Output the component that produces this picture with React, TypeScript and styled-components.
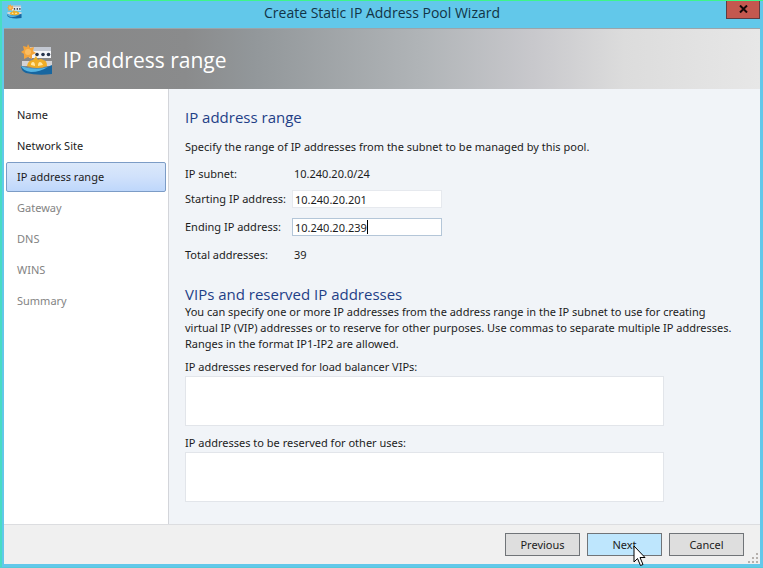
import React, { useState } from "react";
import styled, { createGlobalStyle } from "styled-components";

const GlobalStyle = createGlobalStyle`
  *, *::before, *::after { box-sizing: border-box; }
  html, body, #root { height: 100%; margin: 0; }
  body {
    font-family: "Noto Sans", "Open Sans", sans-serif;
    font-size: 11px;
    line-height: 16px;
    color: #1c1c1c;
    background: #5fc9ea;
  }
  button, input, textarea { font: inherit; color: inherit; }
`;

const Window = styled.div`
  display: flex;
  flex-direction: column;
  min-height: 100vh;
  padding: 0 3px 3px 4px;
  background: #62c8ea;
  border-top: 1px solid #3ef58a;
  border-bottom: 1px solid #55cbd8;
  box-shadow: inset 2px 0 #48dcc4;
`;

const TitleBar = styled.header`
  display: grid;
  grid-template-columns: 34px 1fr 34px;
  align-items: start;
  height: 27px;
`;

const TitleIcon = styled.div`
  padding: 3px 0 0 3px;
  line-height: 0;
`;

const Title = styled.div`
  font-family: "Open Sans", sans-serif;
  font-size: 14px;
  line-height: 24px;
  text-align: center;
  color: #123446;
`;

const CloseButton = styled.button`
  display: flex;
  align-items: center;
  justify-content: center;
  height: 18px;
  padding: 0 0 2px;
  border: 1px solid #5f3c42;
  border-top: 0;
  background: #c4584f;
`;

const Client = styled.main`
  flex: 1;
  display: flex;
  flex-direction: column;
  background: #f1f4f8;
`;

const Banner = styled.div`
  display: flex;
  align-items: center;
  gap: 10px;
  height: 61px;
  padding: 2px 17px 0;
  background: linear-gradient(90deg, #868686 0%, #8a8b8c 24%, #92979a 33%, #b0b4b7 55%, #c8c8cc 70%, #dcdcdc 82%, #e7e7e7 100%);
  border-top: 1px solid #9aa5ab;
`;

const BannerTitle = styled.h1`
  margin: 0;
  font-family: "Open Sans", sans-serif;
  font-size: 21px;
  line-height: 30px;
  font-weight: 400;
  color: #fff;
`;

const Body = styled.div`
  flex: 1;
  display: grid;
  grid-template-columns: 165px 1fr;
`;

const Steps = styled.nav`
  display: flex;
  flex-direction: column;
  gap: 1px;
  padding: 11px 2px;
  background: #fff;
  border-right: 1px solid #d3d5da;
`;

const Step = styled.button<{ $state: "done" | "current" | "todo" }>`
  height: 30px;
  padding: 0 10px;
  text-align: left;
  border: 1px solid ${(p) => (p.$state === "current" ? "#7c9cc6" : "transparent")};
  border-radius: 2px;
  background: ${(p) =>
    p.$state === "current" ? "linear-gradient(#dbe8fa, #d0e1fb 50%, #bed7fb)" : "transparent"};
  color: ${(p) => (p.$state === "todo" ? "#838383" : "#1c1c1c")};
`;

const Content = styled.section`
  padding: 18px 16px 16px;
`;

const Heading = styled.h2`
  margin: 0;
  font-family: "Open Sans", sans-serif;
  font-size: 15px;
  line-height: 20px;
  font-weight: 400;
  color: #1f3f87;
`;

const Intro = styled.p`
  margin: 12px 0;
`;

const Fields = styled.div`
  display: grid;
  grid-template-columns: 107px 150px;
  grid-template-rows: 14px repeat(3, 20px);
  row-gap: 8px;
  align-items: center;
  white-space: nowrap;
  margin-bottom: 19px;
`;

const Value = styled.output`
  padding-left: 2px;
`;

const InputWrap = styled.div`
  position: relative;
  display: flex;
`;

const TextInput = styled.input<{ $active?: boolean }>`
  width: 100%;
  height: 18px;
  padding: 0 2px;
  border: 1px solid ${(p) => (p.$active ? "#b4c6d8" : "#e6e9ee")};
  background: #fff;
  caret-color: transparent;
  outline: 0;
`;

const Caret = styled.span`
  position: absolute;
  left: 75px;
  top: 2px;
  width: 1px;
  height: 14px;
  background: #000;
`;

const Description = styled.p`
  max-width: 552px;
  margin: 0;
`;

const AreaList = styled.div`
  display: flex;
  flex-direction: column;
  gap: 9px;
  margin-top: 7px;
`;

const AreaField = styled.div`
  display: flex;
  flex-direction: column;
  gap: 1px;
`;

const Area = styled.textarea`
  display: block;
  width: 100%;
  max-width: 479px;
  height: 50px;
  padding: 2px;
  border: 1px solid #e2e5ea;
  background: #fff;
  resize: none;
`;

const Footer = styled.footer`
  position: relative;
  display: flex;
  justify-content: flex-end;
  gap: 7px;
  padding: 8px 16px;
  background: #f0f0f0;
  border-top: 1px solid #dcdde0;
`;

const Button = styled.button<{ $hot?: boolean }>`
  width: 75px;
  height: 23px;
  padding: 0;
  border: 1px solid #707478;
  background: ${(p) => (p.$hot ? "#bee6fd" : "#dedede")};
`;

const Grip = styled.svg`
  position: absolute;
  right: 1px;
  bottom: 0;
`;

const Pointer = styled.svg`
  position: absolute;
  right: 114px;
  bottom: -3px;
`;

function PoolIcon({ size }: { size: number }) {
  return (
    <svg width={size} height={size} viewBox="0 0 32 32" aria-hidden="true">
      <path d="M9 3h21v5H9z" fill="#c3c8d2" />
      <path d="M8 7h22v7H8z" fill="#f4f5f8" />
      <path d="M1 17h30v5H1z" fill="#d3d3d6" />
      <path d="M0 22q16 6 31-1v9q-14 2-26-1-5-2-5-7z" fill="#1766a0" />
      <path d="M0 22q14 5 27 1-8 5-17 5-8-1-10-6z" fill="#55b4e2" />
      <circle cx="16" cy="10.500" r="1.800" fill="#26344d" />
      <circle cx="22" cy="10.500" r="1.800" fill="#26344d" />
      <circle cx="27.500" cy="10.500" r="1.800" fill="#26344d" />
      <path d="M6 22q1-6 6-6l3-4 2 4q3-2 5 0 4 0 4 6-9 4-20 0z" fill="#efad25" />
      <path d="M10 21q0-3 2-3t2 4zM17 22q0-4 2-4t3 3z" fill="#ffe6a0" />
      <path d="M7 0l2 4 4-1-1 4 3 2-4 2 0 4-4-2-4 2 0-5-3-2 3-2-1-4 4 1z" fill="#f3a43c" />
      <circle cx="7" cy="8" r="3" fill="#fbbd62" />
    </svg>
  );
}

const steps: { label: string; state: "done" | "current" | "todo" }[] = [
  { label: "Name", state: "done" },
  { label: "Network Site", state: "done" },
  { label: "IP address range", state: "current" },
  { label: "Gateway", state: "todo" },
  { label: "DNS", state: "todo" },
  { label: "WINS", state: "todo" },
  { label: "Summary", state: "todo" },
];

export default function App() {
  const [start, setStart] = useState("10.240.20.201");
  const [end, setEnd] = useState("10.240.20.239");

  return (
    <>
      <GlobalStyle />
      <Window>
        <TitleBar>
          <TitleIcon>
            <PoolIcon size={15} />
          </TitleIcon>
          <Title>Create Static IP Address Pool Wizard</Title>
          <CloseButton aria-label="Close">
            <svg width="9" height="8" viewBox="0 0 9 8" aria-hidden="true">
              <path d="M1 0.5L8 7.5M8 0.5L1 7.5" stroke="#150808" strokeWidth="2" />
            </svg>
          </CloseButton>
        </TitleBar>
        <Client>
          <Banner>
            <PoolIcon size={32} />
            <BannerTitle>IP address range</BannerTitle>
          </Banner>
          <Body>
            <Steps aria-label="Wizard steps">
              {steps.map((s) => (
                <Step key={s.label} $state={s.state} aria-current={s.state === "current" ? "step" : undefined}>
                  {s.label}
                </Step>
              ))}
            </Steps>
            <Content>
              <Heading>IP address range</Heading>
              <Intro>Specify the range of IP addresses from the subnet to be managed by this pool.</Intro>
              <Fields>
                <span>IP subnet:</span>
                <Value>10.240.20.0/24</Value>
                <label htmlFor="start">Starting IP address:</label>
                <InputWrap>
                  <TextInput id="start" value={start} onChange={(e) => setStart(e.target.value)} />
                </InputWrap>
                <label htmlFor="end">Ending IP address:</label>
                <InputWrap>
                  <TextInput id="end" $active value={end} onChange={(e) => setEnd(e.target.value)} />
                  <Caret />
                </InputWrap>
                <span>Total addresses:</span>
                <Value>39</Value>
              </Fields>
              <Heading>VIPs and reserved IP addresses</Heading>
              <Description>
                You can specify one or more IP addresses from the address range in the IP subnet to use for creating
                virtual IP (VIP) addresses or to reserve for other purposes. Use commas to separate multiple IP
                addresses. Ranges in the format IP1-IP2 are allowed.
              </Description>
              <AreaList>
                <AreaField>
                  <label htmlFor="vips">IP addresses reserved for load balancer VIPs:</label>
                  <Area id="vips" />
                </AreaField>
                <AreaField>
                  <label htmlFor="other">IP addresses to be reserved for other uses:</label>
                  <Area id="other" />
                </AreaField>
              </AreaList>
            </Content>
          </Body>
          <Footer>
            <Button>Previous</Button>
            <Button $hot>Next</Button>
            <Button>Cancel</Button>
            <Grip width="12" height="12" viewBox="0 0 12 12" aria-hidden="true">
              <path d="M9 1h2v2H9zM5 5h2v2H5zM9 5h2v2H9zM1 9h2v2H1zM5 9h2v2H5zM9 9h2v2H9z" fill="#b5b0ac" />
            </Grip>
            <Pointer width="13" height="22" viewBox="0 0 13 22" aria-hidden="true">
              <path d="M1 1V17L4.500 13.500L7.500 20.500L10 19.500L7 12.500H12z" fill="#fff" stroke="#000" />
            </Pointer>
          </Footer>
        </Client>
      </Window>
    </>
  );
}
